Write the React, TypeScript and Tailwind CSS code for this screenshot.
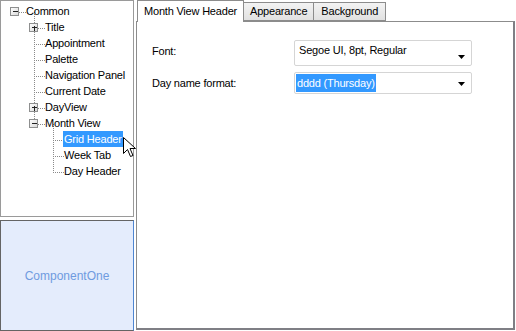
import React from "react"

type Node = { label: string; level: number; box?: "plus" | "minus"; selected?: boolean }

const nodes: Node[] = [
  { label: "Common", level: 0, box: "minus" },
  { label: "Title", level: 1, box: "plus" },
  { label: "Appointment", level: 1 },
  { label: "Palette", level: 1 },
  { label: "Navigation Panel", level: 1 },
  { label: "Current Date", level: 1 },
  { label: "DayView", level: 1, box: "plus" },
  { label: "Month View", level: 1, box: "minus" },
  { label: "Grid Header", level: 2, selected: true },
  { label: "Week Tab", level: 2 },
  { label: "Day Header", level: 2 },
]

const ROW = 16
const TOP = 3
const cy = (i: number) => TOP + i * ROW + 8
const cx = (level: number) => 14 + level * 19

function TreeLines() {
  const dot = { stroke: "#8a8a8a", strokeWidth: 1, strokeDasharray: "1 1", shapeRendering: "crispEdges" as const }
  return (
    <svg className="absolute left-0 top-0" width="134" height="200">
      {/* level 1 spine */}
      <line x1={33.5} y1={cy(0)} x2={33.5} y2={cy(7)} {...dot} />
      {/* level 2 spine */}
      <line x1={52.5} y1={cy(7)} x2={52.5} y2={cy(10) + 0.5} {...dot} />
      {nodes.map((n, i) => {
        const x = cx(n.level)
        const y = cy(i) + 0.5
        return <line key={n.label} x1={x} y1={y} x2={x + 11} y2={y} {...dot} />
      })}
      {nodes.map((n, i) => {
        if (!n.box) return null
        const x = cx(n.level) - 4.5
        const y = cy(i) - 4.5
        return (
          <g key={n.label + "b"} shapeRendering="crispEdges">
            <rect x={x} y={y} width={8} height={8} fill="url(#bx)" stroke="#8e8f8f" />
            <line x1={x + 2} y1={y + 4} x2={x + 7} y2={y + 4} stroke="#222" />
            {n.box === "plus" && <line x1={x + 4.5} y1={y + 2} x2={x + 4.5} y2={y + 7} stroke="#222" />}
          </g>
        )
      })}
      <defs>
        <linearGradient id="bx" x1="0" y1="0" x2="1" y2="1">
          <stop offset="0" stopColor="#ffffff" />
          <stop offset="1" stopColor="#d8d8d8" />
        </linearGradient>
      </defs>
    </svg>
  )
}

function Cursor() {
  return (
    <svg className="absolute" style={{ left: 122, top: 136 }} width="14" height="22" viewBox="0 0 14 22">
      <path
        d="M0.5 0.5 L0.5 16.5 L4.5 12.5 L7.5 19.5 L10 18.5 L7 11.5 L12.5 11.5 Z"
        fill="#fff"
        stroke="#000"
        strokeLinejoin="miter"
      />
    </svg>
  )
}

function Combo({ value, selected, tall }: { value: string; selected?: boolean; tall?: boolean }) {
  return (
    <div
      className={`relative flex w-[178px] rounded-[2px] border border-[#d5d5d5] bg-white ${
        tall ? "h-[26px] items-start pt-[2px] pl-[4px]" : "h-[22px] items-center pl-[1px]"
      }`}
    >
      <span className={selected ? "bg-[#3399ff] px-[1px] leading-[18px] text-white" : "leading-[15px] text-black"}>
        {value}
      </span>
      <svg
        className={`absolute right-[6px] ${tall ? "top-[14px]" : "top-[9px]"}`}
        width="7"
        height="4"
        viewBox="0 0 7 4"
      >
        <path d="M0 0 H7 L3.5 4 Z" fill="#000" />
      </svg>
    </div>
  )
}

export default function App() {
  return (
    <div
      className="flex h-[331px] w-[516px] gap-[2px] overflow-hidden bg-white text-[11px] tracking-[-0.2px] text-black"
      style={{ fontFamily: '"Liberation Sans", Arial, sans-serif' }}
    >
      {/* left column */}
      <div className="flex w-[134px] flex-col gap-[3px]">
        <div className="relative h-[217px] border border-[#9a9a9a] bg-white">
          <TreeLines />
          <div className="relative flex flex-col pt-[2px]">
            {nodes.map((n) => (
              <div key={n.label} className="flex h-[16px] items-center" style={{ paddingLeft: 25 + n.level * 19 - 1 }}>
                <span
                  className={`whitespace-nowrap px-[1px] leading-[16px] ${
                    n.selected ? "bg-[#3399ff] text-white" : ""
                  }`}
                >
                  {n.label}
                </span>
              </div>
            ))}
          </div>
          <Cursor />
        </div>
        <div className="flex h-[111px] items-center justify-center border border-[#646464] border-r-[#4f86d2] bg-[#e4ecfc] text-[12px] tracking-normal text-[#6f9be0]">
          ComponentOne
        </div>
      </div>

      {/* right tab panel */}
      <div className="flex h-[330px] w-[379px] flex-col">
        <div className="flex h-[21px] items-end pl-[1px]">
          <div className="relative z-10 -mb-px flex h-[22px] items-center border border-b-0 border-[#8c8c8c] bg-white px-[6px] pb-[1px]">
            Month View Header
          </div>
          <div className="flex h-[19px] items-center border border-l-0 border-[#8c8c8c] bg-gradient-to-b from-[#f3f3f3] to-[#e1e1e1] px-[6px]">
            Appearance
          </div>
          <div className="flex h-[19px] items-center border border-l-0 border-[#8c8c8c] bg-gradient-to-b from-[#f3f3f3] to-[#e1e1e1] px-[7px]">
            Background
          </div>
        </div>
        <div className="flex flex-1 flex-col gap-[6px] border border-[#8c8c8c] border-r-2 border-b-2 border-r-[#7f7f85] border-b-[#7f7f85] bg-white pl-[15px] pt-[18px]">
          <div className="flex items-start">
            <span className="mt-[3px] w-[142px]">Font:</span>
            <Combo value="Segoe UI, 8pt, Regular" tall />
          </div>
          <div className="flex items-center">
            <span className="w-[142px]">Day name format:</span>
            <Combo value="dddd (Thursday)" selected />
          </div>
        </div>
      </div>
    </div>
  )
}
